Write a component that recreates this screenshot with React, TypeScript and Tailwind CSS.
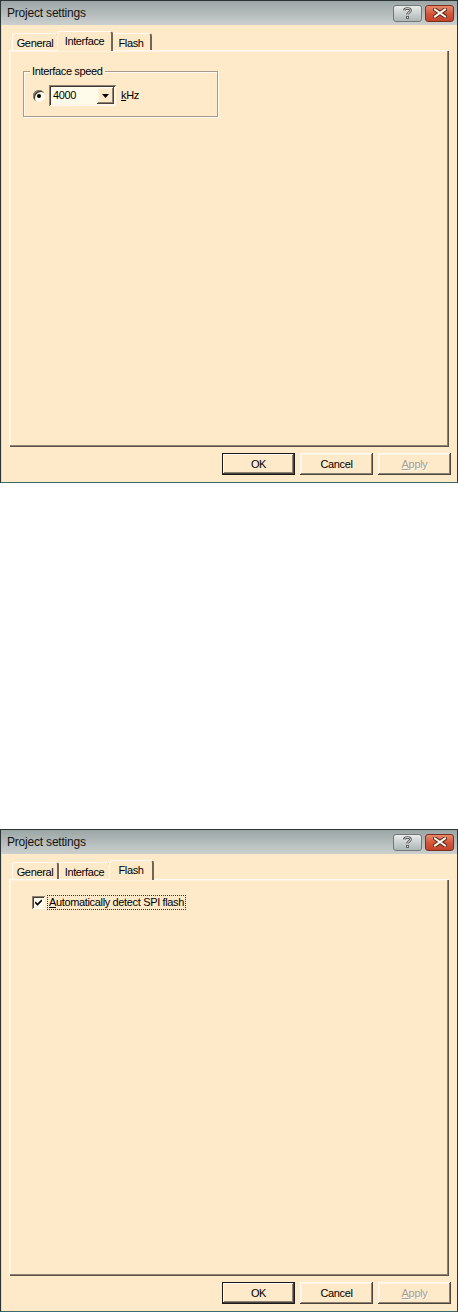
import React from "react";

const raised =
  "shadow-[inset_-1px_-1px_0_#4a433b,inset_1px_1px_0_#fffaf2,inset_-2px_-2px_0_#8d8274,inset_2px_2px_0_#fff3df]";

function Tab({ label, active, w }: { label: string; active: boolean; w: number }) {
  if (active) {
    return (
      <div
        className={`relative z-10 -mx-[2px] -mb-[1px] h-[20px] flex items-start justify-center pt-[2px] rounded-t-[3px] border-t border-l border-[#fffaf2] border-r-2 border-r-[#6f665a] bg-[#fee9c9] ${
          w === 56 ? "w-[56px]" : "w-[45px]"
        }`}
      >
        <span className="text-[11px] leading-[14px] text-black">{label}</span>
      </div>
    );
  }
  return (
    <div
      className={`h-[17px] flex items-start justify-center pt-[2px] rounded-t-[3px] border-t border-l border-[#fffaf2] border-r-2 border-r-[#6f665a] ${
        w === 47 ? "w-[47px]" : w === 52 ? "w-[52px]" : "w-[41px]"
      }`}
    >
      <span className="text-[11px] leading-[14px] text-black">{label}</span>
    </div>
  );
}

function HelpButton() {
  return (
    <div className="w-[29px] h-[17px] rounded-[3px] border border-[#707878] bg-linear-to-b from-[#e9eceb] to-[#aeb6b6] flex items-center justify-center">
      <svg width="9" height="12" viewBox="0 0 9 12">
        <path
          d="M1.5 3.5 C1.5 0.8 7.5 0.8 7.5 3.5 C7.5 5.5 4.5 5.5 4.5 7.5"
          fill="none"
          stroke="#4a4a4a"
          strokeWidth="2.6"
        />
        <path
          d="M1.5 3.5 C1.5 0.8 7.5 0.8 7.5 3.5 C7.5 5.5 4.5 5.5 4.5 7.5"
          fill="none"
          stroke="#f4f4f0"
          strokeWidth="1"
        />
        <rect x="3.1" y="9" width="2.8" height="2.8" fill="#4a4a4a" />
        <rect x="3.9" y="9.8" width="1.2" height="1.2" fill="#f4f4f0" />
      </svg>
    </div>
  );
}

function CloseButton() {
  return (
    <div className="w-[29px] h-[17px] rounded-[3px] border border-[#7a2e1e] bg-linear-to-b from-[#e88a6c] via-[#d4573a] to-[#c2432a] flex items-center justify-center">
      <svg width="14" height="10" viewBox="0 0 14 10">
        <path d="M2 1.5 L12 8.5 M12 1.5 L2 8.5" stroke="#5a2a20" strokeWidth="4" strokeLinecap="square" />
        <path d="M2 1.5 L12 8.5 M12 1.5 L2 8.5" stroke="#fff8f0" strokeWidth="2" strokeLinecap="square" />
      </svg>
    </div>
  );
}

function Buttons() {
  return (
    <div className="flex justify-end gap-[5px] mt-[6px] pr-[6px]">
      <div className="w-[73px] h-[22px] border border-[#1a1a1a] bg-[#fee9c9] flex items-center justify-center shadow-[inset_-1px_-1px_0_#4a433b,inset_1px_1px_0_#fffaf2,inset_-2px_-2px_0_#8d8274]">
        <span className="text-[11px] text-black">OK</span>
      </div>
      <div className={`w-[73px] h-[22px] bg-[#fee9c9] flex items-center justify-center ${raised}`}>
        <span className="text-[11px] text-black">Cancel</span>
      </div>
      <div className={`w-[73px] h-[22px] bg-[#fee9c9] flex items-center justify-center ${raised}`}>
        <span className="text-[11px] text-[#a99d8e] [text-shadow:1px_1px_0_#fffaf2]">
          <span className="underline">A</span>pply
        </span>
      </div>
    </div>
  );
}

function InterfacePanel() {
  return (
    <div className="pt-[21px] pl-[14px]">
      <div className="relative w-[195px] h-[46px] border border-[#a89a88] shadow-[1px_1px_0_#fffaf2,inset_1px_1px_0_#fffaf2]">
        <span className="absolute -top-[8px] left-[6px] px-[2px] bg-[#fee9c9] text-[11px] leading-[14px] text-black">
          Interface speed
        </span>
        <div className="absolute left-[9px] top-[13px] flex items-center">
          <div className="w-[12px] h-[12px] rounded-full bg-[#fffbea] flex items-center justify-center shadow-[inset_1px_1px_0_#8d8274,inset_-1px_-1px_0_#fffaf2,inset_2px_2px_0_#3f3a33]">
            <div className="w-[4px] h-[4px] rounded-full bg-black" />
          </div>
          <div className="ml-[4px] w-[67px] h-[21px] bg-[#fffbea] flex items-center shadow-[inset_1px_1px_0_#8d8274,inset_-1px_-1px_0_#fffaf2,inset_2px_2px_0_#3f3a33,inset_-2px_-2px_0_#fff3df]">
            <span className="pl-[4px] flex-1 text-[11px] text-black">4000</span>
            <div
              className={`mr-[2px] w-[17px] h-[17px] bg-[#fee9c9] flex items-center justify-center ${raised}`}
            >
              <svg width="7" height="4" viewBox="0 0 7 4">
                <path d="M0 0 H7 L3.5 4 Z" fill="#000" />
              </svg>
            </div>
          </div>
          <span className="ml-[5px] text-[11px] text-black">
            <span className="underline">k</span>Hz
          </span>
        </div>
      </div>
    </div>
  );
}

function FlashPanel() {
  return (
    <div className="pt-[16px] pl-[23px] flex items-center">
      <div className="w-[13px] h-[13px] bg-[#fffbea] flex items-center justify-center shadow-[inset_1px_1px_0_#8d8274,inset_-1px_-1px_0_#fffaf2,inset_2px_2px_0_#3f3a33,inset_-2px_-2px_0_#fff3df]">
        <svg width="7" height="7" viewBox="0 0 7 7">
          <path d="M0 3 L2.5 5.5 L7 1" fill="none" stroke="#000" strokeWidth="1.6" />
        </svg>
      </div>
      <span className="ml-[2px] px-[1px] border border-dotted border-[#333] text-[11px] leading-[13px] text-black">
        <span className="underline">A</span>utomatically detect SPI flash
      </span>
    </div>
  );
}

function Dialog({ tab }: { tab: "interface" | "flash" }) {
  return (
    <div className="w-[458px] h-[483px] flex flex-col border border-[#2b3333] border-b-[#3c6a68] font-['Liberation_Sans',Arial,sans-serif] tracking-[-0.35px]">
      <div className="h-[24px] shrink-0 flex items-center justify-between bg-linear-to-b from-[#9ca6a6] to-[#cbd0ce] pl-[6px] pr-[3px]">
        <span className="text-[12px] text-[#141414] tracking-[-0.2px]">Project settings</span>
        <div className="flex gap-[3px] items-center">
          <HelpButton />
          <CloseButton />
        </div>
      </div>
      <div className="flex-1 flex flex-col bg-[#fee9c9] border-l border-l-[#dcdcd4]">
        <div className="h-[25px] shrink-0 flex items-end pl-[10px]">
          <Tab label="General" active={false} w={47} />
          {tab === "interface" ? (
            <Tab label="Interface" active={true} w={56} />
          ) : (
            <Tab label="Interface" active={false} w={52} />
          )}
          {tab === "flash" ? (
            <Tab label="Flash" active={true} w={45} />
          ) : (
            <Tab label="Flash" active={false} w={41} />
          )}
        </div>
        <div className="ml-[7px] w-[440px] h-[397px] shrink-0 bg-[#fee9c9] shadow-[inset_1px_1px_0_#fffaf2,inset_-1px_-1px_0_#5c544a,inset_-2px_-2px_0_#8d8274,inset_2px_2px_0_#fff3df]">
          {tab === "interface" ? <InterfacePanel /> : <FlashPanel />}
        </div>
        <Buttons />
      </div>
    </div>
  );
}

export default function App() {
  return (
    <div className="w-[458px] h-[1313px] bg-white">
      <Dialog tab="interface" />
      <div className="h-[346px]" />
      <Dialog tab="flash" />
    </div>
  );
}
